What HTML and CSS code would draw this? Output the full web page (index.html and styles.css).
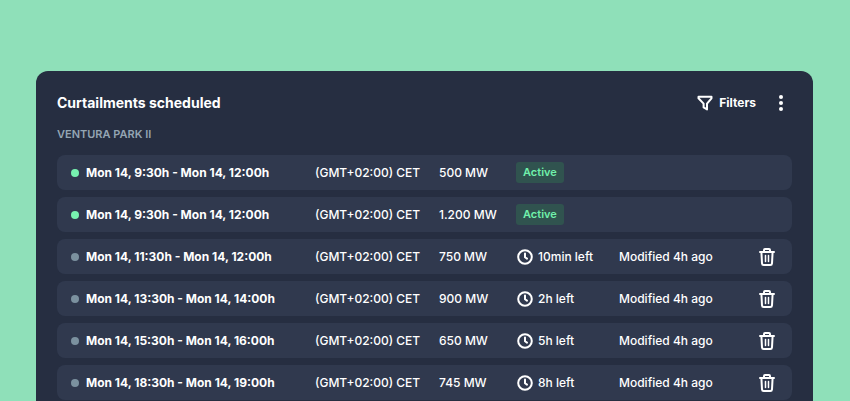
FILE: index.html
```html
<!DOCTYPE html>
<html lang="en">
<head>
<meta charset="utf-8">
<meta name="viewport" content="width=device-width, initial-scale=1">
<title>Curtailments scheduled</title>
<link rel="stylesheet" href="styles.css">
</head>
<body>
<svg class="sprite" aria-hidden="true">
  <symbol id="clock" viewBox="0 0 16 16"><circle cx="8" cy="8" r="6.8"/><path d="M8 4.4V8.2L10 9.6"/></symbol>
  <symbol id="trash" viewBox="0 0 18 20"><path d="M2 5h14M6 4.6V3q0-1 1-1h4q1 0 1 1v1.6M3.4 5l.6 11.4q.1 1.6 1.7 1.6h6.6q1.6 0 1.7-1.6L14.6 5"/><path d="M7.5 8.5v6M10.5 8.5v6"/></symbol>
  <symbol id="funnel" viewBox="0 0 16 16"><path d="M1.5 1.7h13v1.6L10 8.6v5.8l-3.4-2V8.6L1.5 3.3z"/></symbol>
</svg>
<main class="panel">
  <header class="panel-header">
    <h1 class="title">Curtailments scheduled</h1>
    <button class="button" type="button"><svg class="icon"><use href="#funnel"/></svg>Filters</button>
    <button class="button menu" type="button" aria-label="More options"><svg class="dots" viewBox="0 0 6 18"><circle cx="3" cy="3" r="2"/><circle cx="3" cy="9" r="2"/><circle cx="3" cy="15" r="2"/></svg></button>
  </header>
  <h2 class="park">VENTURA PARK II</h2>
  <table class="schedule" aria-label="Scheduled curtailments">
    <colgroup><col class="col-period"><col class="col-zone"><col class="col-power"><col class="col-status"><col class="col-modified"><col class="col-action"></colgroup>
    <tbody>
      <tr><th scope="row"><span class="period active">Mon 14, 9:30h - Mon 14, 12:00h</span></th><td>(GMT+02:00) CET</td><td>500 MW</td><td><span class="badge">Active</span></td><td></td><td></td></tr>
      <tr><th scope="row"><span class="period active">Mon 14, 9:30h - Mon 14, 12:00h</span></th><td>(GMT+02:00) CET</td><td>1.200 MW</td><td><span class="badge">Active</span></td><td></td><td></td></tr>
      <tr><th scope="row"><span class="period">Mon 14, 11:30h - Mon 14, 12:00h</span></th><td>(GMT+02:00) CET</td><td>750 MW</td><td><span class="left"><svg class="icon"><use href="#clock"/></svg>10min left</span></td><td>Modified 4h ago</td><td><button class="delete" type="button" aria-label="Delete"><svg class="trash"><use href="#trash"/></svg></button></td></tr>
      <tr><th scope="row"><span class="period">Mon 14, 13:30h - Mon 14, 14:00h</span></th><td>(GMT+02:00) CET</td><td>900 MW</td><td><span class="left"><svg class="icon"><use href="#clock"/></svg>2h left</span></td><td>Modified 4h ago</td><td><button class="delete" type="button" aria-label="Delete"><svg class="trash"><use href="#trash"/></svg></button></td></tr>
      <tr><th scope="row"><span class="period">Mon 14, 15:30h - Mon 14, 16:00h</span></th><td>(GMT+02:00) CET</td><td>650 MW</td><td><span class="left"><svg class="icon"><use href="#clock"/></svg>5h left</span></td><td>Modified 4h ago</td><td><button class="delete" type="button" aria-label="Delete"><svg class="trash"><use href="#trash"/></svg></button></td></tr>
      <tr><th scope="row"><span class="period">Mon 14, 18:30h - Mon 14, 19:00h</span></th><td>(GMT+02:00) CET</td><td>745 MW</td><td><span class="left"><svg class="icon"><use href="#clock"/></svg>8h left</span></td><td>Modified 4h ago</td><td><button class="delete" type="button" aria-label="Delete"><svg class="trash"><use href="#trash"/></svg></button></td></tr>
    </tbody>
  </table>
</main>
</body>
</html>
```
FILE: styles.css
```css
* { box-sizing: border-box; }

body {
  margin: 0;
  min-height: 100vh;
  display: flex;
  padding: 71px 37px 0 36px;
  background: #8fe0b9;
  color: #fff;
  font: 500 12px/20px Inter, sans-serif;
}

.sprite { position: absolute; width: 0; height: 0; }

svg { fill: none; stroke: currentColor; stroke-width: 2; stroke-linecap: round; stroke-linejoin: round; }

#trash path:last-child { stroke-width: 1.5; }

.panel {
  flex: 1;
  padding: 22px 21px 0;
  border-radius: 12px 12px 0 0;
  background: #262e41;
}

.panel-header { display: flex; align-items: center; }

.title { flex: 1; margin: 0; font-size: 14px; line-height: 20px; font-weight: 700; }

.button, .delete {
  display: flex;
  align-items: center;
  padding: 0;
  border: 0;
  background: none;
  color: inherit;
  font: inherit;
  cursor: pointer;
}

.button { gap: 6px; font-weight: 700; }
.menu { margin: 0 8px 0 22px; }
.icon { width: 16px; height: 16px; }
.dots { width: 6px; height: 18px; fill: currentColor; stroke: none; }
.trash { width: 18px; height: 20px; }

.park {
  margin: 13px 0;
  color: #94a5b3;
  font-size: 11px;
  line-height: 16px;
  font-weight: 600;
}

.schedule { width: 100%; table-layout: fixed; border-spacing: 0 7px; margin: -7px 0; }
.col-period { width: 258px; }
.col-zone { width: 124px; }
.col-power { width: 77px; }
.col-status { width: 103px; }
.col-action { width: 34px; }

th, td { height: 35px; padding: 0; background: #30394e; text-align: left; white-space: nowrap; }
th { padding-left: 14px; border-radius: 8px 0 0 8px; font-weight: 700; }
td:last-child { border-radius: 0 8px 8px 0; }

.period, .left { display: flex; align-items: center; }
.period { gap: 7px; }
.period::before { content: ""; width: 8px; height: 8px; border-radius: 50%; background: #7b919f; }
.active::before { background: #77f2b0; }
.left { gap: 5px; padding-left: 1px; }

.badge {
  display: inline-block;
  padding: 0 7px;
  border-radius: 3px;
  background: #30534f;
  color: #70f0ab;
  font-size: 11px;
  line-height: 21px;
  font-weight: 600;
}
```
